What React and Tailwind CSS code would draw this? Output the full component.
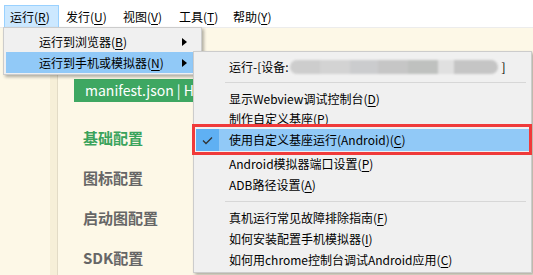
import React from "react";

const U = ({ children }) => <span className="underline underline-offset-[2px] decoration-[1px]">{children}</span>;

const Arrow = () => (
  <svg width="5" height="8" viewBox="0 0 5 8" className="block">
    <polygon points="0,0 5,4 0,8" fill="#000" />
  </svg>
);

const Item = ({ h = "h-[21px]", children }) => (
  <div className={`${h} flex items-center pl-[35px] text-[12px] text-black whitespace-nowrap`}>{children}</div>
);

const Sep = ({ h = "h-[11px]" }) => (
  <div className={`${h} flex items-center pl-[31px] pr-[5px]`}>
    <div className="h-px w-full bg-[#d7d7d7]" />
  </div>
);

export default function App() {
  return (
    <div className="relative w-[533px] h-[275px] overflow-hidden bg-[#fdf8e7] font-['Noto_Sans_CJK_SC','Noto_Sans',sans-serif]">
      {/* menubar */}
      <div className="h-[28px] bg-white border-b border-[#ececec] flex pl-[4px] text-[12px] text-black">
        <div className="mt-[5px] h-[23px] w-[55px] bg-[#cce8ff] border border-[#99d1ff] pl-[5px] flex items-center">运行(<U>R</U>)</div>
        <div className="mt-[5px] h-[23px] w-[57px] pl-[7px] flex items-center">发行(<U>U</U>)</div>
        <div className="mt-[5px] h-[23px] w-[57px] pl-[7px] flex items-center">视图(<U>V</U>)</div>
        <div className="mt-[5px] h-[23px] w-[56px] pl-[6px] flex items-center">工具(<U>T</U>)</div>
        <div className="mt-[5px] h-[23px] w-[56px] pl-[4px] flex items-center">帮助(<U>Y</U>)</div>
      </div>

      {/* page body */}
      <div className="flex h-[247px]">
        <div className="w-[50px] bg-[#fdf8e7]" />
        <div className="w-[7px] bg-[#f6efd8]" />
        <div className="w-px bg-[#e2dbc6]" />
        <div className="flex-1 pl-[16px] pt-[51px]">
          <div className="h-[23px] w-[170px] bg-[#3ea762] text-white text-[14px] pl-[11px] flex items-center whitespace-nowrap">manifest.json | H5</div>
          <div className="mt-[16px] pl-[9px] flex flex-col text-[15px] font-bold">
            <div className="h-[40px] flex items-center text-[#3aa35c]">基础配置</div>
            <div className="h-[40px] flex items-center text-[#666]">图标配置</div>
            <div className="h-[40px] flex items-center text-[#666]">启动图配置</div>
            <div className="h-[40px] flex items-center text-[#666]">SDK配置</div>
          </div>
        </div>
      </div>

      {/* menu 1 */}
      <div className="absolute left-[3px] top-[27px] w-[199px] h-[48px] bg-[#f0f0f0] border border-[#cccccc] shadow-[2px_2px_3px_rgba(0,0,0,0.3)] pt-[3px] text-[12px] text-black">
        <div className="h-[21px] flex items-center pl-[35px] pr-[14px] whitespace-nowrap">
          <span className="flex-1">运行到浏览器(<U>B</U>)</span>
          <Arrow />
        </div>
        <div className="h-[21px] mx-[2px] bg-[#91c9f7] flex items-center pl-[33px] pr-[12px] whitespace-nowrap">
          <span className="flex-1">运行到手机或模拟器(<U>N</U>)</span>
          <Arrow />
        </div>
      </div>

      {/* menu 2 */}
      <div className="absolute left-[193px] top-[51px] w-[339px] h-[222px] bg-[#f0f0f0] border border-[#cccccc] shadow-[2px_2px_3px_rgba(0,0,0,0.3)] pt-[5px]">
        <Item h="h-[20px]">
          <span>运行-[设备:</span>
          <span className="ml-[1px] flex h-[14px] w-[208px] items-center overflow-hidden rounded-full blur-[1.2px]">
            <span className="h-full w-[30px] bg-[#cdcdcd]" />
            <span className="h-full w-[30px] bg-[#d3d3d3]" />
            <span className="h-full w-[28px] bg-[#cbccce]" />
            <span className="h-full w-[30px] bg-[#c6c6c6]" />
            <span className="h-full w-[30px] bg-[#bfc1bf]" />
            <span className="h-full w-[16px] bg-[#e0e0e0]" />
            <span className="h-full w-[44px] bg-[#c5c5c5]" />
          </span>
          <span className="ml-[4px]">]</span>
        </Item>
        <Sep h="h-[11px]" />
        <Item>显示Webview调试控制台(<U>D</U>)</Item>
        <Item h="h-[20px]">制作自定义基座(<U>P</U>)</Item>
        <div className="h-[22px] mx-[2px] bg-[#91c9f7] flex items-center text-[12px] text-black whitespace-nowrap">
          <div className="h-full w-[23px] bg-[#5fb0f3] flex items-center justify-center">
            <svg width="11" height="9" viewBox="0 0 11 9">
              <polyline points="1,4.5 4,7.5 10,1.5" fill="none" stroke="#333" strokeWidth="1.3" />
            </svg>
          </div>
          <span className="pl-[10px]">使用自定义基座运行(Android)(<U>C</U>)</span>
        </div>
        <div className="h-[2px]" />
        <Item>Android模拟器端口设置(<U>P</U>)</Item>
        <Item>ADB路径设置(<U>A</U>)</Item>
        <Sep h="h-[12px]" />
        <Item>真机运行常见故障排除指南(<U>F</U>)</Item>
        <Item>如何安装配置手机模拟器(<U>I</U>)</Item>
        <Item>如何用chrome控制台调试Android应用(<U>C</U>)</Item>
      </div>

      {/* red annotation box */}
      <div className="absolute left-[192px] top-[124px] w-[340px] h-[31px] border-[3px] border-[#f03a3a]" />
    </div>
  );
}
